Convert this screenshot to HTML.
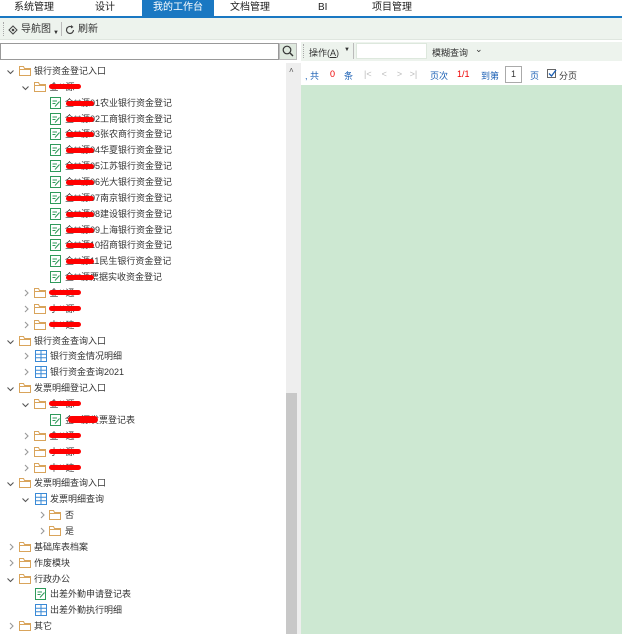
<!DOCTYPE html>
<html><head><meta charset="utf-8"><style>
*{margin:0;padding:0;box-sizing:border-box}
body{width:622px;height:634px;overflow:hidden;background:#fff;font-family:"Liberation Sans","Noto Sans CJK SC",sans-serif;font-size:9px;color:#333;position:relative}
.nav{position:absolute;left:0;top:0;width:622px;height:18px;border-bottom:2px solid #1a78c2;background:#fff}
.nav span{position:absolute;top:0;height:16px;line-height:16px;font-size:10px;color:#222}
.nav .sel{background:#1a78c2;color:#fff;text-align:center}
.tb{position:absolute;left:0;top:18px;width:622px;height:22px;background:#edf3ed;border-bottom:1px solid #dfe6df}
.tb span{position:absolute;top:5px;font-size:10px;line-height:14px}
.row{position:absolute;height:16px;line-height:16px;white-space:nowrap}
.row svg{position:absolute;top:2px}
.t{position:absolute;top:0}
.red{position:absolute;background:#f00;border-radius:6px;height:5px}
</style></head><body>
<div class="nav">
<span style="left:14px">系统管理</span>
<span style="left:95px">设计</span>
<span class="sel" style="left:142px;width:72px">我的工作台</span>
<span style="left:230px">文档管理</span>
<span style="left:318px">BI</span>
<span style="left:372px">项目管理</span>
</div>
<div class="tb">
<div style="position:absolute;left:3px;top:4px;width:1px;height:14px;border-left:1px dotted #aaa"></div>
<svg style="position:absolute;left:8px;top:7px" width="10" height="10"><path d="M5 1L9 5L5 9L1 5Z" fill="none" stroke="#444"/><circle cx="5" cy="5" r="1.3" fill="#444"/></svg>
<span style="left:21px">导航图</span><span style="left:53px;font-size:6px;top:8px">▼</span>
<div style="position:absolute;left:61px;top:4px;width:1px;height:14px;background:#bbb"></div>
<svg style="position:absolute;left:65px;top:7px" width="10" height="10"><path d="M8.5 5A3.5 3.5 0 1 1 6.5 1.8" fill="none" stroke="#444" stroke-width="1.2"/><path d="M6 0L8.5 2L6 3.5Z" fill="#444"/></svg>
<span style="left:78px">刷新</span>
</div>
<div style="position:absolute;left:0;top:43px;width:279px;height:17px;border:1px solid #999;background:#fff"></div>
<div style="position:absolute;left:279px;top:43px;width:18px;height:17px;background:#dfe9df;border:1px solid #bbb"></div>
<svg style="position:absolute;left:282px;top:45px" width="12" height="12"><circle cx="5" cy="5" r="3.8" fill="none" stroke="#333" stroke-width="1.2"/><path d="M8 8L11 11" stroke="#333" stroke-width="1.4"/></svg>
<div style="position:absolute;left:286px;top:63px;width:15px;height:571px;background:#eee"></div>
<div style="position:absolute;left:286px;top:393px;width:11px;height:241px;background:#c8c8c8"></div>
<div style="position:absolute;left:289px;top:66px;font-size:8px;color:#555">˄</div>
<div style="position:absolute;left:301px;top:40px;width:321px;height:594px;background:#fff"></div>
<div style="position:absolute;left:301px;top:42px;width:321px;height:19px;background:#edf3ed"></div>
<div style="position:absolute;left:303px;top:44px;width:1px;height:14px;border-left:1px dotted #aaa"></div>
<span style="position:absolute;left:309px;top:46px">操作(<u>A</u>)</span><span style="position:absolute;left:344px;top:47px;font-size:6px">▼</span>
<div style="position:absolute;left:353px;top:43px;width:1px;height:16px;background:#bbb"></div>
<div style="position:absolute;left:356px;top:43px;width:71px;height:16px;background:#fff;border:1px solid #dde8dd"></div>
<span style="position:absolute;left:432px;top:46px">模糊查询</span><span style="position:absolute;left:475px;top:44px;font-size:9px">⌄</span>
<div style="position:absolute;left:301px;top:64px;width:321px;height:20px;font-size:9px;color:#1a5fb4">
<span style="position:absolute;left:4px;top:5px">, 共</span>
<span style="position:absolute;left:29px;top:5px;color:#e00">0</span>
<span style="position:absolute;left:43px;top:5px">条</span>
<span style="position:absolute;left:63px;top:5px;color:#bbb">|&lt;&nbsp;&nbsp;&nbsp;&nbsp;&lt;&nbsp;&nbsp;&nbsp;&nbsp;&gt;&nbsp;&nbsp;&nbsp;&gt;|</span>
<span style="position:absolute;left:129px;top:5px">页次</span>
<span style="position:absolute;left:156px;top:5px;color:#e00">1/1</span>
<span style="position:absolute;left:180px;top:5px">到第</span>
<div style="position:absolute;left:204px;top:2px;width:17px;height:17px;border:1px solid #aaa;background:#fff;color:#333;text-align:center;line-height:15px">1</div>
<span style="position:absolute;left:229px;top:5px">页</span>
<div style="position:absolute;left:246px;top:5px;width:9px;height:9px;border:1px solid #666;background:#fff"></div>
<svg style="position:absolute;left:247px;top:5px" width="9" height="9"><path d="M1 4.5L3.5 7L8 1" fill="none" stroke="#1a5fb4" stroke-width="1.3"/></svg>
<span style="position:absolute;left:258px;top:5px;color:#333">分页</span>
</div>
<div style="position:absolute;left:301px;top:85px;width:321px;height:549px;background:#cde8d2"></div>

<svg width="0" height="0" style="position:absolute">
<defs>
<g id="fo"><path d="M0.5 2.5V10.5H11.5V3.5H5.5L4.5 1.5H0.5Z M0.5 4.5H11.5" fill="none" stroke="#d9a45b"/></g>
<g id="fm"><rect x="0.5" y="0.5" width="10" height="11" fill="none" stroke="#2e9a5a"/><path d="M2.5 4H7M2.5 6.5H5.5M5 9.5L9.5 4.5" stroke="#2e9a5a" fill="none"/></g>
<g id="gr"><rect x="0.5" y="0.5" width="11" height="11" fill="none" stroke="#3a8ad6"/><path d="M0.5 4.2H11.5M0.5 7.8H11.5M6 0.5V11.5" stroke="#3a8ad6"/></g>
<g id="ao"><path d="M0.5 2.5L3.5 5.5L6.5 2.5" fill="none" stroke="#555" stroke-width="1.1"/></g>
<g id="ac"><path d="M2 1L5 4L2 7" fill="none" stroke="#999" stroke-width="1.1"/></g>
</defs></svg>

<div id="tree"></div>
<script>
var rows=[
[0,'o','fo','银行资金登记入口'],
[1,'o','fo','<r>源',1],
[2,'','fm','金**源01农业银行资金登记',2],
[2,'','fm','金**源02工商银行资金登记',2],
[2,'','fm','金**源03张农商行资金登记',2],
[2,'','fm','金**源04华夏银行资金登记',2],
[2,'','fm','金**源05江苏银行资金登记',2],
[2,'','fm','金**源06光大银行资金登记',2],
[2,'','fm','金**源07南京银行资金登记',2],
[2,'','fm','金**源08建设银行资金登记',2],
[2,'','fm','金**源09上海银行资金登记',2],
[2,'','fm','金**源10招商银行资金登记',2],
[2,'','fm','金**源11民生银行资金登记',2],
[2,'','fm','金**源票据实收资金登记',2],
[1,'c','fo','金**通',1],
[1,'c','fo','小**源',1],
[1,'c','fo','中**建',1],
[0,'o','fo','银行资金查询入口'],
[1,'c','gr','银行资金情况明细'],
[1,'c','gr','银行资金查询2021'],
[0,'o','fo','发票明细登记入口'],
[1,'o','fo','金**源',1],
[2,'','fm','金**源发票登记表',3],
[1,'c','fo','金**通',1],
[1,'c','fo','小**源',1],
[1,'c','fo','中**建',1],
[0,'o','fo','发票明细查询入口'],
[1,'o','gr','发票明细查询'],
[2,'c','fo','否'],
[2,'c','fo','是'],
[0,'c','fo','基础库表档案'],
[0,'c','fo','作废模块'],
[0,'o','fo','行政办公'],
[1,'','fm','出差外勤申请登记表'],
[1,'','gr','出差外勤执行明细'],
[0,'c','fo','其它']
];
var h='';
rows.forEach(function(r,i){
 var top=63+i*15.86, L=r[0], ax=7+L*15, ix=19+L*15, tx=34+L*15.5;
 if(r[2]!=='fo'&&L>=1&&r[1]===''){ix=50+(L-2)*15;tx=65+(L-2)*15;if(L==1){ix=35;tx=50;}}
 if(L==1&&r[2]=='gr'){ix=35;tx=50;}
 if(L==2&&r[2]=='fo'){ax=38;ix=49;tx=65;}
 h+='<div class="row" style="left:0;top:'+top+'px;width:285px">';
 if(r[1]=='o')h+='<svg style="left:'+ax+'px;top:5px" width="8" height="8"><use href="#ao"/></svg>';
 if(r[1]=='c')h+='<svg style="left:'+(ax+1)+'px;top:4px" width="8" height="8"><use href="#ac"/></svg>';
 h+='<svg style="left:'+ix+'px" width="12" height="12"><use href="#'+r[2]+'"/></svg>';
 h+='<span class="t" style="left:'+tx+'px">'+r[3].replace('<r>','金**')+'</span>';
 if(r[4]==1)h+='<div class="red" style="left:'+(tx-1)+'px;top:5px;width:32px"></div>';
 if(r[4]==2)h+='<div class="red" style="left:'+(tx+1)+'px;top:6px;width:28px"></div>';
 if(r[4]==3)h+='<div class="red" style="left:'+(tx+3)+'px;top:4px;width:30px;height:7px"></div>';
 h+='</div>';
});
document.getElementById('tree').innerHTML=h;
</script>
</body></html>
